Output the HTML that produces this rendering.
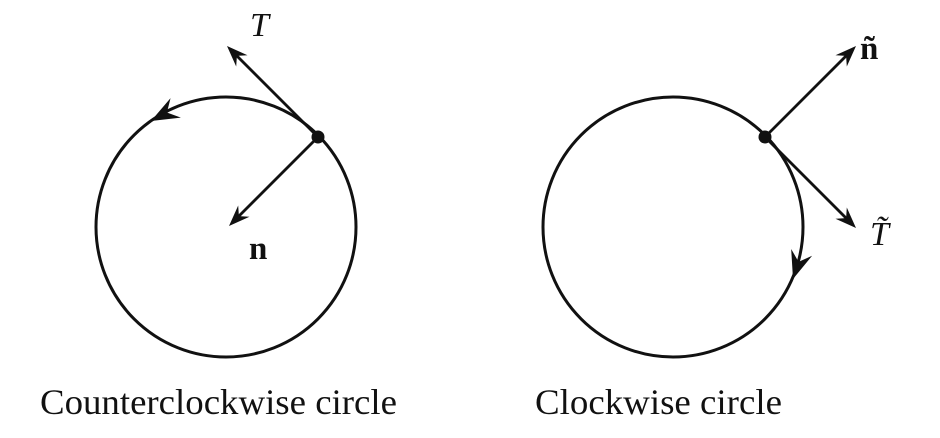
<!DOCTYPE html>
<html><head><meta charset="utf-8"><style>
html,body{margin:0;padding:0;background:#fff;width:940px;height:438px;overflow:hidden}
text{font-family:"Liberation Serif",serif;fill:#111}
</style></head><body>
<svg width="940" height="438" viewBox="0 0 940 438" xmlns="http://www.w3.org/2000/svg">
<defs>
<path id="ah" d="M0,0 L-21,-8 L-14,0 L-21,8 Z" fill="#111"/>
<path id="ahb" d="M0,0 L-28,-11 L-18,0 L-28,11 Z" fill="#111"/>
</defs>
<g stroke="#111" fill="none">
<circle cx="226" cy="227" r="130" stroke-width="3"/>
<circle cx="673" cy="227" r="130" stroke-width="3"/>
<line x1="318" y1="137" x2="232" y2="51" stroke-width="2.8"/>
<line x1="318" y1="137" x2="235" y2="220" stroke-width="2.8"/>
<line x1="765" y1="137" x2="851" y2="51" stroke-width="2.8"/>
<line x1="765" y1="137" x2="851" y2="223" stroke-width="2.8"/>
</g>
<circle cx="318" cy="137" r="6.5" fill="#111"/>
<circle cx="765" cy="137" r="6.5" fill="#111"/>
<use href="#ah" transform="translate(227,46) rotate(-135)"/>
<use href="#ah" transform="translate(229,226) rotate(135)"/>
<use href="#ah" transform="translate(856,46) rotate(-45)"/>
<use href="#ah" transform="translate(856,228) rotate(45)"/>
<use href="#ahb" transform="translate(151,121) rotate(152)"/>
<use href="#ahb" transform="translate(793,279) rotate(108)"/>
<text x="250" y="36" font-size="34" font-style="italic">T</text>
<text x="249" y="259" font-size="33" font-weight="bold">n</text>
<text x="860" y="59" font-size="33" font-weight="bold">ñ</text>
<text x="870" y="245" font-size="34" font-style="italic">T̃</text>
<text x="40" y="414" font-size="36" textLength="357" lengthAdjust="spacingAndGlyphs">Counterclockwise circle</text>
<text x="535" y="414" font-size="36" textLength="247" lengthAdjust="spacingAndGlyphs">Clockwise circle</text>
</svg>
</body></html>
